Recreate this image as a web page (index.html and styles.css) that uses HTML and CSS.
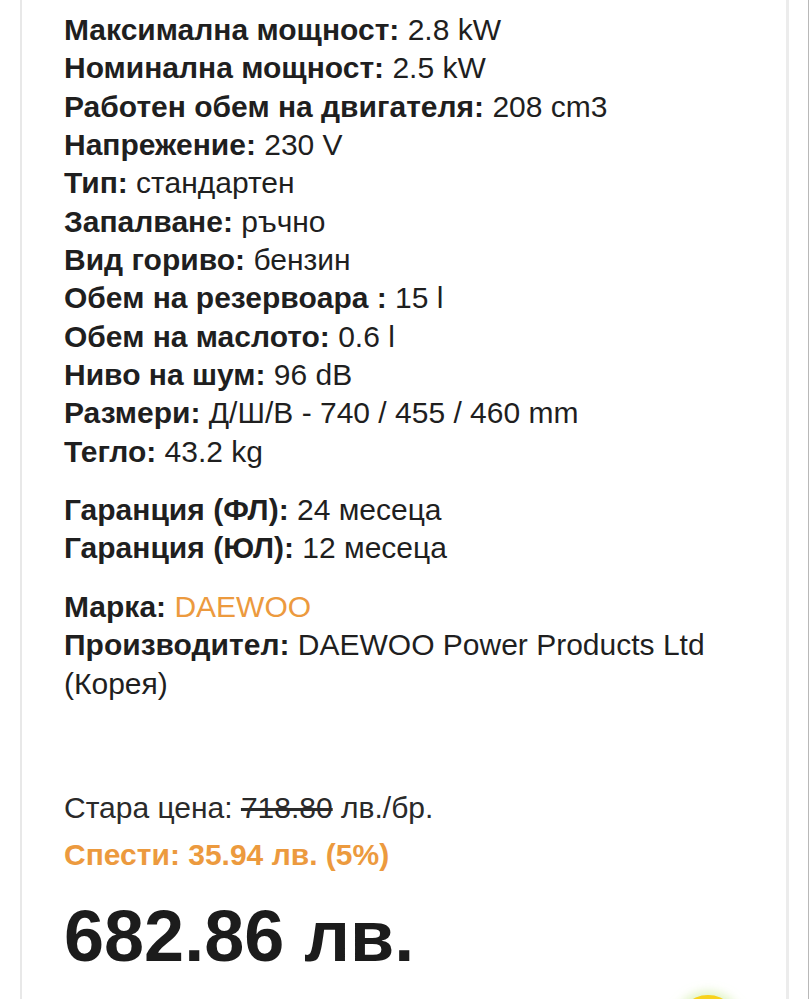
FILE: index.html
```html
<!DOCTYPE html>
<html lang="bg">
<head>
<meta charset="utf-8">
<title>DAEWOO</title>
<link rel="stylesheet" href="styles.css">
</head>
<body>
<div class="page">
  <div class="card">
    <div class="group">
      <p><b>Максимална мощност:</b> 2.8 kW</p>
      <p><b>Номинална мощност:</b> 2.5 kW</p>
      <p><b>Работен обем на двигателя:</b> 208 cm3</p>
      <p><b>Напрежение:</b> 230 V</p>
      <p><b>Тип:</b> стандартен</p>
      <p><b>Запалване:</b> ръчно</p>
      <p><b>Вид гориво:</b> бензин</p>
      <p><b>Обем на резервоара :</b> 15 l</p>
      <p><b>Обем на маслото:</b> 0.6 l</p>
      <p><b>Ниво на шум:</b> 96 dB</p>
      <p><b>Размери:</b> Д/Ш/В - 740 / 455 / 460 mm</p>
      <p><b>Тегло:</b> 43.2 kg</p>
    </div>
    <div class="group">
      <p><b>Гаранция (ФЛ):</b> 24 месеца</p>
      <p><b>Гаранция (ЮЛ):</b> 12 месеца</p>
    </div>
    <div class="group">
      <p><b>Марка:</b> <span class="brand">DAEWOO</span></p>
      <p><b>Производител:</b> DAEWOO Power Products Ltd (Корея)</p>
    </div>
    <div class="price">
      <p class="old">Стара цена: <s>718.80</s> лв./бр.</p>
      <p class="save">Спести: 35.94 лв. (5%)</p>
      <p class="current">682.86 лв.</p>
    </div>
  </div>
</div>
<div class="fab"></div>
</body>
</html>
```

FILE: styles.css
```css
html, body {
  margin: 0;
  padding: 0;
  background: #ffffff;
}
body {
  font-family: "Liberation Sans", Arial, sans-serif;
  color: #1f1f1f;
  overflow: hidden;
}
.page {
  width: 808px;
  min-height: 999px;
  border-right: 1px solid #b8b8b8;
}
.card {
  margin-left: 20px;
  min-height: 999px;
  border-left: 2px solid #e8e8e8;
  border-right: 3px solid #ececec;
  padding: 11px 0 0 42px;
  box-sizing: content-box;
  width: 722px;
}
.group p {
  margin: 0;
  font-size: 30px;
  line-height: 38.35px;
}
.group b {
  font-weight: 700;
}
.group + .group {
  margin-top: 20px;
}
.brand {
  color: #ec9a3e;
}
.price {
  margin-top: 82px;
}
.price p {
  margin: 0;
}
.old {
  font-size: 30px;
  line-height: 46px;
  color: #2a2a2a;
}
.old s {
  text-decoration: line-through;
}
.save {
  font-size: 30px;
  line-height: 48px;
  font-weight: 700;
  color: #ec9a3e;
}
.price .current {
  margin-top: 14px;
  font-size: 72px;
  line-height: 86px;
  font-weight: 700;
  color: #1c1c1c;
}
.fab {
  position: fixed;
  left: 676px;
  top: 995px;
  width: 64px;
  height: 64px;
  border-radius: 50%;
  background: #f8d21c;
  box-shadow: 0 0 10px 4px rgba(200, 235, 150, 0.55);
}
```
